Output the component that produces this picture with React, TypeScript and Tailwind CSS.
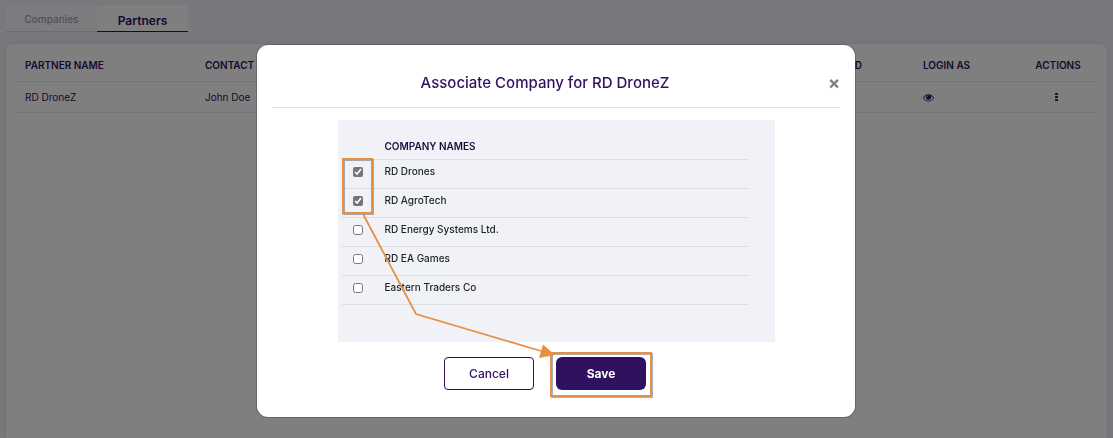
import { useState } from 'react';

interface Partner {
  id: number;
  name: string;
  contact: string;
}

interface Company {
  id: string;
  name: string;
  selected: boolean;
}

const partners: Partner[] = [{ id: 1, name: 'RD DroneZ', contact: 'John Doe' }];

const initialCompanies: Company[] = [
  { id: 'rd-drones', name: 'RD Drones', selected: true },
  { id: 'rd-agrotech', name: 'RD AgroTech', selected: true },
  { id: 'rd-energy', name: 'RD Energy Systems Ltd.', selected: false },
  { id: 'rd-ea-games', name: 'RD EA Games', selected: false },
  { id: 'eastern-traders', name: 'Eastern Traders Co', selected: false },
];

function EyeIcon() {
  return (
    <svg viewBox="0 0 1792 1792" className="h-[11px] w-[11px]" fill="currentColor" aria-hidden="true">
      <path d="M1664 960q-152-236-381-353 61 104 61 225 0 185-131.5 316.5t-316.5 131.5-316.5-131.5-131.5-316.5q0-121 61-225-229 117-381 353 133 205 333.5 326.5t434.5 121.5 434.5-121.5 333.5-326.5zm-720-384q0-20-14-34t-34-14q-125 0-214.5 89.5t-89.5 214.5q0 20 14 34t34 14 34-14 14-34q0-86 61-147t147-61q20 0 34-14t14-34zm848 384q0 34-20 69-140 230-376.5 368.5t-499.5 138.5-499.5-139-376.5-368q-20-35-20-69t20-69q140-229 376.5-368t499.5-139 499.5 139 376.5 368q20 35 20 69z" />
    </svg>
  );
}

function DotsIcon() {
  return (
    <svg viewBox="0 0 3 8" className="h-[8px] w-[3px]" fill="currentColor" aria-hidden="true">
      <rect width="3" height="2" y="0" rx="0.4" />
      <rect width="3" height="2" y="3" rx="0.4" />
      <rect width="3" height="2" y="6" rx="0.4" />
    </svg>
  );
}

function PartnersTable() {
  return (
    <table className="w-full table-fixed text-left text-[10px] leading-4 text-[#2f1160]">
      <colgroup>
        <col className="w-[180px]" />
        <col />
        <col className="w-[71px]" />
        <col className="w-[105px]" />
        <col className="w-[80px]" />
      </colgroup>
      <thead>
        <tr className="border-b border-[#e4e6ea]">
          <th className="px-[10px] pt-[5px] pb-2 font-semibold">PARTNER NAME</th>
          <th className="px-[10px] pt-[5px] pb-2 font-semibold">CONTACT NAME</th>
          <th className="px-[10px] pt-[5px] pb-2 font-semibold">ID</th>
          <th className="px-[10px] pt-[5px] pb-2 font-semibold">LOGIN AS</th>
          <th className="pt-[5px] pb-2 text-center font-semibold">ACTIONS</th>
        </tr>
      </thead>
      <tbody>
        {partners.map((partner) => (
          <tr key={partner.id} className="border-b border-[#e4e6ea]">
            <td className="px-[10px] py-[7px]">{partner.name}</td>
            <td className="px-[10px] py-[7px]">{partner.contact}</td>
            <td className="px-[10px] py-[7px]"></td>
            <td className="px-[10px] py-[7px]">
              <button type="button" aria-label="Login as partner" className="block">
                <EyeIcon />
              </button>
            </td>
            <td className="py-[7px] pr-1">
              <button type="button" aria-label="Actions" className="mx-auto block">
                <DotsIcon />
              </button>
            </td>
          </tr>
        ))}
      </tbody>
    </table>
  );
}

// Highlights the ticked companies and points from them to the save button
function Callouts() {
  return (
    <svg
      viewBox="0 0 598 372"
      className="pointer-events-none absolute top-0 left-0 h-[372px] w-[598px]"
      fill="none"
      aria-hidden="true"
    >
      <g stroke="#5b5b66" strokeOpacity="0.5" strokeWidth="2">
        <rect x="87" y="115" width="29" height="54" />
        <rect x="295" y="309" width="100" height="43" />
      </g>
      <g stroke="#e69045" strokeWidth="2">
        <rect x="86" y="114" width="29" height="54" />
        <rect x="294" y="308" width="100" height="43" />
        <path d="M106 169 L159 269 L284 306" strokeWidth="1.8" />
      </g>
      <path d="M286 299.500 L298 310 L282 313 Z" fill="#e69045" />
    </svg>
  );
}

export default function App() {
  const [companies, setCompanies] = useState<Company[]>(initialCompanies);

  const toggleCompany = (id: string) => {
    setCompanies(companies.map((c) => (c.id === id ? { ...c, selected: !c.selected } : c)));
  };

  return (
    <div className="flex min-h-screen flex-col bg-[#f1f3f9] px-[6px] pt-[5px] font-['Inter',sans-serif]">
      <nav className="flex h-[27px]">
        <button type="button" className="w-[91px] border-b border-[#d9d9e0] bg-[#f7f8fb] pt-[3px] text-[10px] font-medium text-[#a79bbd]">
          Companies
        </button>
        <button type="button" className="w-[91px] rounded-t border-b border-[#2f1160] bg-white pt-[5px] text-xs font-semibold text-[#2f1160]">
          Partners
        </button>
      </nav>

      <main className="mt-3 flex-1 rounded-t-lg bg-white px-[9px] pt-2 shadow-[0_0_8px_rgba(0,0,0,0.1)]">
        <PartnersTable />
      </main>

      <div className="fixed inset-0 flex items-start justify-center bg-black/50 pt-11 pr-px">
        <div
          role="dialog"
          aria-modal="true"
          aria-labelledby="dialog-title"
          className="relative w-full max-w-[600px] rounded-xl border border-black/20 bg-white bg-clip-padding p-[15px] pb-[27px]"
        >
          <header className="flex items-center border-b border-[#dee2e6] pt-[11px] pb-3">
            <h2 id="dialog-title" className="flex-1 pr-[10px] text-center text-[15px] leading-6 font-medium text-[#2f1160]">
              Associate Company for RD DroneZ
            </h2>
            <button type="button" aria-label="Close" className="w-3 text-lg leading-5 font-bold text-[#7f7f7f]">
              ×
            </button>
          </header>

          <div className="mx-auto mt-3 max-w-[437px] bg-[#f1f2f7] pt-[15px] pr-[27px] pb-[37px] pl-1">
            <table className="w-full table-fixed text-left text-[10px] leading-4 text-[#212529]">
              <colgroup>
                <col className="w-8" />
                <col />
              </colgroup>
              <thead>
                <tr className="border-b border-[#dcdde1]">
                  <td></td>
                  <th className="pt-[3px] pb-[5px] pl-[11px] font-semibold text-[#160f3d]">COMPANY NAMES</th>
                </tr>
              </thead>
              <tbody>
                {companies.map((company) => (
                  <tr key={company.id} className="border-b border-[#dcdde1]">
                    <td className="pt-[7px] align-top">
                      <input
                        id={company.id}
                        type="checkbox"
                        checked={company.selected}
                        onChange={() => toggleCompany(company.id)}
                        className="mx-auto block h-[10px] w-[10px] accent-[#757575]"
                      />
                    </td>
                    <td className="pt-[3px] pb-[9px] pl-[11px] font-medium">
                      <label htmlFor={company.id}>{company.name}</label>
                    </td>
                  </tr>
                ))}
              </tbody>
            </table>
          </div>

          <footer className="mt-[15px] flex justify-center gap-[22px] pr-[22px]">
            <button
              type="button"
              className="h-[33px] w-[90px] rounded border border-[#2f1160] bg-white text-xs font-medium text-[#2f1160]"
            >
              Cancel
            </button>
            <button type="button" className="h-[33px] w-[90px] rounded-md bg-[#2f1160] text-xs font-bold text-white">
              Save
            </button>
          </footer>

          <Callouts />
        </div>
      </div>
    </div>
  );
}
